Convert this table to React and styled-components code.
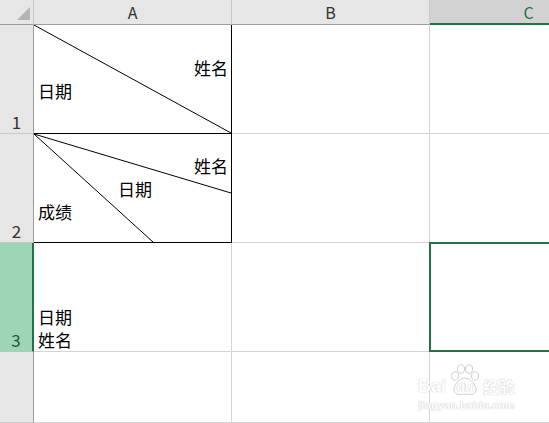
import React from 'react'
import styled, { createGlobalStyle } from 'styled-components'

const Global = createGlobalStyle`
  html, body { margin: 0; padding: 0; background: #fff; }
  body { font-family: "Noto Sans CJK SC", "Noto Sans", sans-serif; }
`

const Sheet = styled.div`
  position: relative;
  width: 549px;
  height: 423px;
  overflow: hidden;
  display: grid;
  grid-template-columns: 34px 198px 198px 198px;
  grid-template-rows: 25px 109px 109px 109px 1fr;
  background: #fff;
`

const Corner = styled.div`
  background: #e6e6e6;
  border-right: 1px solid #c8c8c8;
  border-bottom: 1px solid #9e9e9e;
  box-sizing: border-box;
  display: flex;
  align-items: flex-end;
  justify-content: flex-end;
  padding: 0 3px 4px 0;
`

const ColHead = styled.div`
  background: ${p => (p.$active ? '#d2d2d2' : '#e6e6e6')};
  border-right: 1px solid ${p => (p.$active ? '#e6e6e6' : '#c8c8c8')};
  border-bottom: ${p => (p.$active ? '2px solid #217346' : '1px solid #9e9e9e')};
  box-sizing: border-box;
  color: ${p => (p.$active ? '#217346' : '#333')};
  font-size: 16px;
  display: flex;
  align-items: center;
  justify-content: center;
  padding-top: ${p => (p.$active ? '1px' : '0')};
`

const RowHead = styled.div`
  background: ${p => (p.$active ? '#9fd5b7' : '#e6e6e6')};
  border-right: ${p => (p.$active ? '2px solid #217346' : '1px solid #9e9e9e')};
  border-bottom: 1px solid ${p => (p.$active ? '#9fd5b7' : '#c8c8c8')};
  box-sizing: border-box;
  color: ${p => (p.$active ? '#1d5a38' : '#333')};
  font-size: 17px;
  line-height: 20px;
  display: flex;
  align-items: flex-end;
  justify-content: center;
  padding: 0 0 1px 0;
`

const Cell = styled.div`
  position: relative;
  box-sizing: border-box;
  border-right: 1px solid ${p => (p.$boxed ? '#000' : '#d4d4d4')};
  border-bottom: 1px solid ${p => (p.$boxed ? '#000' : '#d4d4d4')};
  font-size: 17px;
  line-height: 23px;
  color: #000;
  padding: 0 3px 0 4px;
  display: flex;
  flex-direction: column;
  justify-content: ${p => p.$valign || 'center'};
`

const Selected = styled.div`
  position: absolute;
  inset: -1px -2px -1px -1px;
  border: 2px solid #217346;
  pointer-events: none;
`

const Line = styled.div`
  position: relative;
  z-index: 1;
  text-align: ${p => p.$align || 'left'};
  padding-left: ${p => p.$indent || 0}px;
`

const Diagonals = styled.svg`
  position: absolute;
  left: 0;
  top: 0;
  width: 100%;
  height: 100%;
`

const Watermark = styled.div`
  position: absolute;
  left: 418px;
  top: 364px;
  display: flex;
  flex-direction: column;
  align-items: center;
  color: #fff;
  text-shadow: 0 0 1px #c8c8c8, 0 0 1px #c8c8c8;
  pointer-events: none;
`

const MarkTop = styled.div`
  display: flex;
  align-items: flex-end;
  font-family: "Liberation Sans", sans-serif;
  font-weight: bold;
  font-size: 18px;
  line-height: 20px;
`

const PawBox = styled.div`
  position: relative;
  width: 32px;
  height: 32px;
  margin: 0 2px 0 3px;
  display: flex;
  align-items: flex-end;
  justify-content: center;
`

const PawText = styled.span`
  position: relative;
  font-size: 14px;
  line-height: 16px;
  padding-bottom: 1px;
`

const MarkCjk = styled.span`
  font-family: "Noto Sans CJK SC", sans-serif;
  font-size: 16px;
`

const MarkUrl = styled.div`
  font-family: "Liberation Sans", sans-serif;
  font-weight: bold;
  font-size: 11px;
  line-height: 12px;
  margin-top: 3px;
`

const Paw = () => (
  <svg width="32" height="32" viewBox="0 0 32 32" style={{ position: 'absolute', left: 0, top: 0 }}>
    <g fill="#fff" stroke="#d0d0d0" strokeWidth="1">
      <ellipse cx="6" cy="12" rx="3.5" ry="4.2" />
      <ellipse cx="12" cy="5" rx="3.5" ry="4.2" />
      <ellipse cx="20" cy="5" rx="3.5" ry="4.2" />
      <ellipse cx="26" cy="12" rx="3.5" ry="4.2" />
      <path d="M16 14 C10 14 4 22 5 27 C6 31 12 31 16 30 C20 31 26 31 27 27 C28 22 22 14 16 14 Z" />
    </g>
  </svg>
)

export default function App() {
  return (
    <>
      <Global />
      <Sheet>
        <Corner>
          <svg width="13" height="13" viewBox="0 0 13 13">
            <polygon points="13,0 13,13 0,13" fill="#b4b4b4" />
          </svg>
        </Corner>
        <ColHead>A</ColHead>
        <ColHead>B</ColHead>
        <ColHead $active>C</ColHead>

        <RowHead>1</RowHead>
        <Cell $boxed>
          <Diagonals viewBox="0 0 197 108" preserveAspectRatio="none">
            <line x1="0" y1="0" x2="197" y2="108" stroke="#000" strokeWidth="1" />
          </Diagonals>
          <Line $align="right">姓名</Line>
          <Line>日期</Line>
        </Cell>
        <Cell />
        <Cell />

        <RowHead>2</RowHead>
        <Cell $boxed>
          <Diagonals viewBox="0 0 197 108" preserveAspectRatio="none">
            <line x1="0" y1="0" x2="197" y2="59" stroke="#000" strokeWidth="1" />
            <line x1="0" y1="0" x2="119" y2="108" stroke="#000" strokeWidth="1" />
          </Diagonals>
          <Line $align="right">姓名</Line>
          <Line $indent={80}>日期</Line>
          <Line>成绩</Line>
        </Cell>
        <Cell />
        <Cell />

        <RowHead $active>3</RowHead>
        <Cell $valign="flex-end">
          <Line>日期</Line>
          <Line>姓名</Line>
        </Cell>
        <Cell />
        <Cell>
          <Selected />
        </Cell>

        <RowHead />
        <Cell />
        <Cell />
        <Cell />

        <Watermark>
          <MarkTop>
            <span>Bai</span>
            <PawBox>
              <Paw />
              <PawText>du</PawText>
            </PawBox>
            <MarkCjk>经验</MarkCjk>
          </MarkTop>
          <MarkUrl>jingyan.baidu.com</MarkUrl>
        </Watermark>
      </Sheet>
    </>
  )
}
